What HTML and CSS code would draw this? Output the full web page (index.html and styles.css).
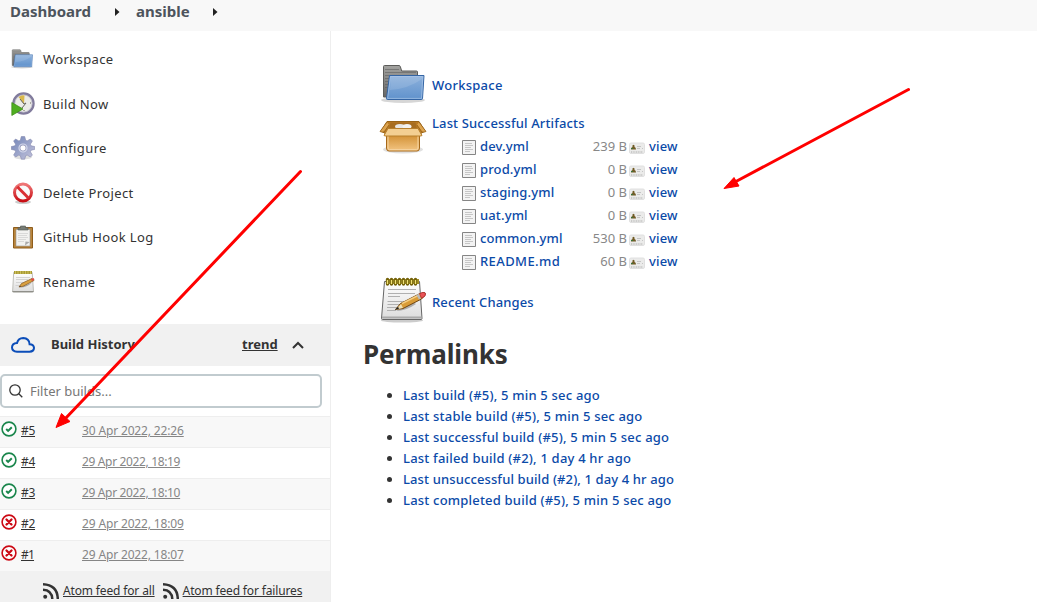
FILE: index.html
```html
<!DOCTYPE html>
<html lang="en">
<head>
<meta charset="utf-8">
<title>ansible [Jenkins]</title>
<link rel="stylesheet" href="styles.css">
</head>
<body>
<svg class="defs" width="0" height="0" aria-hidden="true">
  <defs>
    <linearGradient id="blue" x1="0" y1="0" x2="0" y2="1"><stop offset="0" stop-color="#8db1dc"/><stop offset="1" stop-color="#6092cc"/></linearGradient>
    <linearGradient id="grey" x1="0" y1="0" x2="0" y2="1"><stop offset="0" stop-color="#a3a3a0"/><stop offset="1" stop-color="#666"/></linearGradient>
    <linearGradient id="paper" x1="0" y1="0" x2="0" y2="1"><stop offset="0" stop-color="#fff"/><stop offset="1" stop-color="#dcdcdc"/></linearGradient>
    <linearGradient id="box" x1="0" y1="0" x2="0" y2="1"><stop offset="0" stop-color="#cf8c2d"/><stop offset="1" stop-color="#f3c583"/></linearGradient>
    <linearGradient id="gear" x1="0" y1="0" x2="1" y2="1"><stop offset="0" stop-color="#7084b7"/><stop offset="1" stop-color="#c5c4dc"/></linearGradient>
    <linearGradient id="red" x1="0" y1="0" x2="0" y2="1"><stop offset="0" stop-color="#ef7777"/><stop offset="1" stop-color="#c80d14"/></linearGradient>
  </defs>
  <symbol id="folder" viewBox="0 0 48 48">
    <ellipse cx="24" cy="40" rx="22" ry="3" fill="#000" opacity=".16"/>
    <path d="M4.500 37V6.500q0-1 1-1H20q1 0 1.300 1l1.400 4.500H37.500q1 0 1 1V37z" fill="url(#grey)" stroke="#5c5c5a"/>
    <path d="M6 9.500H20M6 12.500H37M6 15.500H12M6 18.500H10M6 21.500H10M6 24.500H9M6 27.500H9" stroke="#555" stroke-width=".8" opacity=".6"/>
    <path d="M10.500 15.500H45L43.500 38.500Q43.400 39.500 42.500 39.500H8.500q-1 0-1-1z" fill="url(#blue)" stroke="#3465a4"/>
    <path d="M11.500 16.500H43.800L42.500 38.400H8.600z" fill="none" stroke="#a8c5e8" opacity=".7"/>
    <path d="M11 30q18-1 32-11l1-2.500H12z" fill="#fff" opacity=".12"/>
  </symbol>
  <symbol id="notepad" viewBox="0 0 48 48">
    <ellipse cx="23" cy="44.500" rx="21" ry="2" fill="#000" opacity=".2"/>
    <path d="M5.500 5.500h35l2.500 37q0 1-1 1H3.500q-1 0-1-1z" fill="url(#paper)" stroke="#666"/>
    <path d="M3 41.500H42.500" stroke="#aaa" stroke-width="2"/>
    <path d="M9 13.500H37M9 17.500H36M9 20.500H21M8.500 25.500H30M8.500 28.500H27M8 31.500H24M8 34.500H17" stroke="#b0b0b0"/>
    <path d="M7 5.500H40" stroke="#a59225" stroke-width="5"/>
    <path d="M8.500 3.500v4.500M12.500 3.500v4.500M16.500 3.500v4.500M20.500 3.500v4.500M24.500 3.500v4.500M28.500 3.500v4.500M32.500 3.500v4.500M36.500 3.500v4.500" stroke="#75630b" stroke-width="3.400" stroke-linecap="round"/>
    <path d="M8.500 4v4M12.500 4v4M16.500 4v4M20.500 4v4M24.500 4v4M28.500 4v4M32.500 4v4M36.500 4v4" stroke="#efe173" stroke-width="1.300"/>
    <path d="M17 35q10 0 20-7l-3-2z" fill="#000" opacity=".25"/>
    <path d="M16.500 33.500l5-6L40 18l5.500-1.500q1.500 1.500 0 3.500l-3 3L24 32.500z" fill="#d99c37" stroke="#704510"/>
    <path d="M23 27.500L41 18.500" stroke="#f5ce83" stroke-width="1.500"/>
    <path d="M17 33.500l5-5.500 2 4z" fill="#eee0b7"/><path d="M16 33.800l3-3 1 2z" fill="#222"/>
    <path d="M38.500 18.500l2.500 4.500" stroke="#bbb" stroke-width="2.500"/>
    <path d="M40.500 17.700q4-2.500 6-.5 1 3-4 5z" fill="#e95357" stroke="#a62a2a" stroke-width=".7"/>
  </symbol>
  <symbol id="doc" viewBox="0 0 16 16">
    <path d="M1.500.5h13v14h-13z" fill="#f3f3f3" stroke="#858585"/>
    <path d="M4 3.500h7M4 5.500h8M4 7.500h6M4 9.500h8M4 11.500h5" stroke="#c6c6c6"/>
  </symbol>
  <symbol id="card" viewBox="0 0 16 16">
    <rect x=".5" y="3" width="15" height="10.500" rx="1.500" fill="#ebebea" stroke="#e0e0e0"/>
    <path d="M2 9.500q0-2.500 1.500-2.500-.7-2 1-2.300 1.600.3 1 2.300Q7 7 7 9.500z" fill="#715b25"/><path d="M2 8.500h2" stroke="#397238"/>
    <path d="M8 6.500h4M8 8.500h3M13 8.500h1" stroke="#bbb" stroke-width=".8"/><path d="M2 12h12" stroke="#aaa" stroke-dasharray="1 .7"/>
  </symbol>
  <symbol id="ok" viewBox="0 0 16 16"><circle cx="8" cy="8" r="6.900" fill="#fff" stroke="#1a864c" stroke-width="1.600"/><path d="M5.200 8.100l1.900 1.800 3.700-3.700" fill="none" stroke="#1a864c" stroke-width="2"/></symbol>
  <symbol id="bad" viewBox="0 0 16 16"><circle cx="8" cy="8" r="6.900" fill="#fff" stroke="#cc0914" stroke-width="1.600"/><path d="M5.500 5.500l5 5M10.500 5.500l-5 5" fill="none" stroke="#cc0914" stroke-width="2.300" stroke-linecap="round"/></symbol>
  <symbol id="rss" viewBox="0 0 16 16"><circle cx="2.200" cy="13.800" r="2" fill="#333"/><path d="M0 6.700Q8.800 7 9.300 16M0 1.300Q14.500 2 14.800 16" fill="none" stroke="#333" stroke-width="2.500"/></symbol>
</svg>

<header class="crumbs">
  <a class="crumb crumb-root">Dashboard</a>
  <svg class="sep" viewBox="0 0 5 8"><path d="M0 0l4.500 4L0 8z"/></svg>
  <a class="crumb crumb-job">ansible</a>
  <svg class="sep" viewBox="0 0 5 8"><path d="M0 0l4.500 4L0 8z"/></svg>
</header>

<div class="page">
  <aside class="side">
    <nav class="tasks">
      <a class="task t-workspace"><svg class="ico"><use href="#folder"/></svg><span>Workspace</span></a>
      <a class="task t-build"><svg class="ico" viewBox="0 0 24 24"><circle cx="12.500" cy="11.500" r="10" fill="#ecece8" stroke="#817b9c" stroke-width="2.400"/><circle cx="12.500" cy="11.500" r="8.600" fill="none" stroke="#bdbbca" stroke-width=".8"/><path d="M13 12L7.500 5q3.500-2.500 6-1.500z" fill="#d9b84c"/><path d="M9 7l4 5 2-1-4 5M19 11h1M13 18v1" fill="none" stroke="#66665f"/><path d="M.8 10.500L12 17 .8 23.500z" fill="#4fae20" stroke="#398813" stroke-width=".7"/></svg><span>Build Now</span></a>
      <a class="task t-config"><svg class="ico" viewBox="0 0 24 24"><ellipse cx="12" cy="21" rx="9" ry="2.500" fill="#000" opacity=".12"/><path fill-rule="evenodd" d="M10.300 .5h3.400l1 3.800 1.400.6L19.400 3 21.400 5 19.400 8.200l.7 1.600 3.600.8v2.800l-3.600.8-.7 1.600 2 3.200-2 2-3.300-2-1.400.7-1 3.500h-3.400l-1-3.500-1.400-.7-3.300 2-2-2 2-3.200-.7-1.600-3.600-.8v-2.800l3.600-.8.7-1.600L2.600 5l2-2 3.300 1.900 1.400-.6zM12 9a3 3 0 1 0 0 6 3 3 0 0 0 0-6z" fill="url(#gear)" stroke="#8789ae" stroke-width=".6"/><circle cx="12" cy="12" r="4" fill="none" stroke="#d4d8ea" stroke-width="1.200"/></svg><span>Configure</span></a>
      <a class="task t-delete"><svg class="ico" viewBox="0 0 24 24"><ellipse cx="12" cy="21" rx="8" ry="2" fill="#000" opacity=".2"/><circle cx="12" cy="11.500" r="8.500" fill="#fafafa" stroke="url(#red)" stroke-width="3"/><path d="M6.300 5.800l11.400 11.400" stroke="#d92f33" stroke-width="3"/></svg><span>Delete Project</span></a>
      <a class="task t-hook"><svg class="ico" viewBox="0 0 24 24"><path d="M2.500 2.500h19v20.500h-19z" fill="#b9853c" stroke="#8e5d1c"/><path d="M5 4.500h14v16.500H5z" fill="#f2f2f0" stroke="#999" stroke-width=".6"/><path d="M7 8.500h10M7 10.500h9M7 12.500h10M7 14.500h8M7 16.500h6" stroke="#d2d2d2" stroke-width=".8"/><path d="M14 20.500l.5-4 4.200.5z" fill="#aaa"/><path d="M7 5V2.700h2.500V1h5v1.700H17V5z" fill="#777d77" stroke="#555b55" stroke-width=".6"/></svg><span>GitHub Hook Log</span></a>
      <a class="task t-rename"><svg class="ico" viewBox="0 0 24 24"><path d="M2.700 2.500h18.500l1.300 19q0 .8-1 .8h-19q-1 0-.9-.8z" fill="url(#paper)" stroke="#b0b0aa" stroke-width=".8"/><path d="M1.500 21.500h21" stroke="#8f8f89"/><path d="M3 2.500h18" stroke="#a89a36" stroke-width="3"/><path d="M4.500 1v3M7 1v3M9.500 1v3M12 1v3M14.500 1v3M17 1v3M19.500 1v3" stroke="#d7cb68" stroke-width=".8"/><path d="M5 7.500h14M5 9.500h12M5 12.500h7M4.500 15.500h5" stroke="#ccc" stroke-width=".8"/><path d="M9 17.500q7 0 12-5z" fill="#000" opacity=".3"/><path d="M8 17l2.500-3.500L21 8.500l2 2-11 5.800z" fill="#d9a040" stroke="#84551b" stroke-width=".7"/><path d="M20 9l2.500-1 1 1.500-2.500 1.700z" fill="#e04a45"/><path d="M7.700 17.200l1.800-1.300.5.700z" fill="#222"/></svg><span>Rename</span></a>
    </nav>

    <section class="history">
      <div class="history-head">
        <svg class="cloud" viewBox="0 0 24 16"><path d="M6 14.700H18.500Q22.900 14.500 23 10.900 22.800 7.500 18.600 7.300 18.200 1.300 12.200 1.100 7.300 1.200 6 6.100 1.100 6.400 1 10.500 1.200 14.500 6 14.700z"/></svg>
        <strong class="history-title">Build History</strong>
        <a class="trend">trend</a>
        <svg class="chev" viewBox="0 0 12 8"><path d="M1 7l5-5 5 5"/></svg>
      </div>
      <div class="filter-wrap">
        <div class="filter"><svg class="mag" viewBox="0 0 14 14"><circle cx="6" cy="6" r="5.200"/><path d="M9.800 9.800l3.500 3.500"/></svg><span class="placeholder">Filter builds...</span></div>
      </div>
      <div class="build"><svg class="status"><use href="#ok"/></svg><a class="num">#5</a><a class="date">30 Apr 2022, 22:26</a></div>
      <div class="build"><svg class="status"><use href="#ok"/></svg><a class="num">#4</a><a class="date date-narrow">29 Apr 2022, 18:19</a></div>
      <div class="build"><svg class="status"><use href="#ok"/></svg><a class="num">#3</a><a class="date date-narrow">29 Apr 2022, 18:10</a></div>
      <div class="build"><svg class="status"><use href="#bad"/></svg><a class="num">#2</a><a class="date">29 Apr 2022, 18:09</a></div>
      <div class="build"><svg class="status"><use href="#bad"/></svg><a class="num num-narrow">#1</a><a class="date">29 Apr 2022, 18:07</a></div>
      <div class="feeds">
        <svg class="rss"><use href="#rss"/></svg><a class="feed f-all">Atom feed for all</a>
        <svg class="rss rss-second"><use href="#rss"/></svg><a class="feed f-fail">Atom feed for failures</a>
      </div>
    </section>
  </aside>

  <main class="main">
    <div class="entry workspace"><svg class="big"><use href="#folder"/></svg><a class="m-workspace">Workspace</a></div>
    <div class="entry artifacts">
      <svg class="big" viewBox="0 0 48 48"><ellipse cx="24" cy="38.500" rx="20" ry="4" fill="#000" opacity=".12"/><path d="M8 10.500h32L46 20l-5 3-3-3H10l-3 3-5-3z" fill="#b97a24" stroke="#9a6417"/><path d="M11.500 11.500h25l2 8.500h-29z" fill="#a76d20"/><ellipse cx="21" cy="15.500" rx="5" ry="2.500" fill="#e8e7e4"/><ellipse cx="28" cy="15.500" rx="4.500" ry="2.500" fill="#f3f2ef"/><path d="M8 11L1 20.500q2 1 4 .5l5-7M40 11l7 9.500q-2 1-4 .5l-5-7" fill="#dda44f" stroke="#966015" stroke-width=".8"/><path d="M7.500 22.500h33V37q0 3-2.500 3H10q-2.500 0-2.500-3z" fill="url(#box)" stroke="#a76919"/><path d="M9 23.500V37q0 1.700 1.500 1.700h27Q39 38.700 39 37V23.500" fill="none" stroke="#f7d7a5"/><path d="M9 17.500h30l4 7q-1 .5-2 .5H7q-1 0-2-.5z" fill="#f3cf92" stroke="#b8802d"/></svg>
      <div class="artifact-body">
        <a class="m-artifacts">Last Successful Artifacts</a>
        <div class="files">
          <div class="file"><svg class="doc"><use href="#doc"/></svg><a class="name">dev.yml</a><span class="size">239 B</span><svg class="card"><use href="#card"/></svg><a class="view">view</a></div>
          <div class="file"><svg class="doc"><use href="#doc"/></svg><a class="name">prod.yml</a><span class="size">0 B</span><svg class="card"><use href="#card"/></svg><a class="view">view</a></div>
          <div class="file"><svg class="doc"><use href="#doc"/></svg><a class="name">staging.yml</a><span class="size">0 B</span><svg class="card"><use href="#card"/></svg><a class="view">view</a></div>
          <div class="file"><svg class="doc"><use href="#doc"/></svg><a class="name">uat.yml</a><span class="size">0 B</span><svg class="card"><use href="#card"/></svg><a class="view">view</a></div>
          <div class="file"><svg class="doc"><use href="#doc"/></svg><a class="name">common.yml</a><span class="size">530 B</span><svg class="card"><use href="#card"/></svg><a class="view">view</a></div>
          <div class="file"><svg class="doc"><use href="#doc"/></svg><a class="name name-caps">README.md</a><span class="size">60 B</span><svg class="card"><use href="#card"/></svg><a class="view">view</a></div>
        </div>
      </div>
    </div>
    <div class="entry changes"><svg class="big"><use href="#notepad"/></svg><a class="m-changes">Recent Changes</a></div>
    <h2 class="heading">Permalinks</h2>
    <ul class="links">
      <li><a>Last build (#5), 5 min 5 sec ago</a></li>
      <li><a>Last stable build (#5), 5 min 5 sec ago</a></li>
      <li><a>Last successful build (#5), 5 min 5 sec ago</a></li>
      <li><a>Last failed build (#2), 1 day 4 hr ago</a></li>
      <li><a class="link-tight">Last unsuccessful build (#2), 1 day 4 hr ago</a></li>
      <li><a>Last completed build (#5), 5 min 5 sec ago</a></li>
    </ul>
  </main>
</div>

<svg class="arrows" viewBox="0 0 1037 602">
  <path d="M300.500 171.500L64 420M908.500 89.500L735 182" class="shaft"/>
  <path d="M56 427.500L61.500 413.500 70 421.500zM724 188.500L734 177.500 739 186z" class="tip"/>
</svg>
</body>
</html>
```
FILE: styles.css
```css
* { box-sizing: border-box; }
body { margin: 0; width: 1037px; height: 602px; overflow: hidden; position: relative; background: #fff; color: #333; font: 14px/21px "Noto Sans", "Open Sans", sans-serif; }
.defs { position: absolute; }
svg { display: block; flex: none; }
a { white-space: nowrap; }

.crumbs { height: 31px; background: #f8f8f8; display: flex; align-items: center; padding: 0 0 8px 10px; font-size: 15px; font-weight: 700; color: #4d545d; }
.sep { width: 5px; height: 8px; fill: #222; }
.crumb-root { width: 105px; }
.crumb-job { width: 77px; margin-left: 16px; }
.crumb { margin-top: -1px; }

.page { display: flex; height: 571px; }
.side { width: 331px; border-right: 1px solid #eeeeee; display: flex; flex-direction: column; }
.tasks { height: 293px; padding-top: 6px; display: flex; flex-direction: column; font-size: 13px; letter-spacing: .38px; }
.task { height: 44.5px; display: flex; align-items: center; padding-left: 11px; gap: 8px; }
.task span { padding-top: 1px; }
.t-workspace .ico { margin-left: -1px; margin-right: 1px; }
.ico { width: 24px; height: 24px; }

.history-head { height: 42px; background: #f1f1f1; display: flex; align-items: center; padding-left: 11px; font-size: 13px; font-weight: 700; }
.cloud { width: 24px; height: 16px; fill: none; stroke: #0b4db9; stroke-width: 2; }
.history-title { width: 191px; margin: -2px 0 0 16px; font-weight: 700; }
.trend { width: 50px; margin-top: -2px; text-decoration: underline; }
.chev { width: 12px; height: 8px; fill: none; stroke: #333; stroke-width: 2; }
.filter-wrap { height: 50px; padding-top: 8px; }
.filter { width: 322px; height: 34px; border: 2px solid #c1cbcf; border-radius: 5px; display: flex; align-items: center; padding-left: 7px; gap: 7px; font-size: 13px; color: #777; }
.mag { width: 14px; height: 14px; fill: none; stroke: #333; stroke-width: 1.300; }
.build { height: 31px; border-top: 1px solid #eee; display: flex; align-items: center; padding-left: 1px; font-size: 12px; }
.build:nth-child(odd) { background: #f8f8f8; }
.status { width: 16px; height: 16px; margin-top: -6px; }
.num { width: 61px; margin: -4px 0 0 4px; letter-spacing: -.3px; text-decoration: underline; }
.num-narrow { letter-spacing: -.8px; }
.date { margin-top: -4px; color: #868686; letter-spacing: -.15px; text-decoration: underline; }
.date-narrow { letter-spacing: -.35px; }
.feeds { height: 31px; background: #f1f1f1; display: flex; align-items: center; padding: 8px 0 0 43px; font-size: 12px; }
.rss { width: 16px; height: 16px; }
.feed { margin-left: 4px; letter-spacing: -.15px; text-decoration: underline; }
.rss-second { margin-left: 8px; }

.main { flex: 1; padding: 29px 0 0 48px; font-size: 13px; }
.main a { color: #0b4aa8; font-weight: 500; letter-spacing: .14px; }
.entry { display: flex; }
.big { width: 48px; height: 48px; }
.workspace { height: 51px; }
.main .m-workspace { margin: 15px 0 0 5px; letter-spacing: .25px; }
.artifacts { height: 165px; }
.artifact-body { padding: 2px 0 0 5px; }
.m-artifacts { display: block; height: 22px; }
.files { margin-left: 29px; }
.file { height: 23px; display: flex; align-items: center; }
.doc { width: 16px; height: 16px; margin-top: 3px; }
.name { width: 96px; margin-left: 3px; }
.main .name-caps { letter-spacing: .4px; }
.size { width: 51px; text-align: right; color: #888; }
.card { width: 16px; height: 16px; margin: 2px 4px 0 2px; }
.changes { height: 60px; }
.m-changes { margin: 16px 0 0 5px; }
.heading { margin: 0 0 0 -16px; height: 49px; font-size: 26px; line-height: 36px; font-weight: 700; letter-spacing: -.1px; }
.links { margin: 0; padding-left: 24px; font-size: 13px; }
.links li { height: 21px; }
.main .links a { letter-spacing: .2px; }
.main .links .link-tight { letter-spacing: .12px; }

.arrows { position: absolute; inset: 0; width: 1037px; height: 602px; pointer-events: none; }
.shaft { fill: none; stroke: #f00; stroke-width: 3; stroke-linecap: round; }
.tip { fill: #f00; stroke: #f00; }
```
